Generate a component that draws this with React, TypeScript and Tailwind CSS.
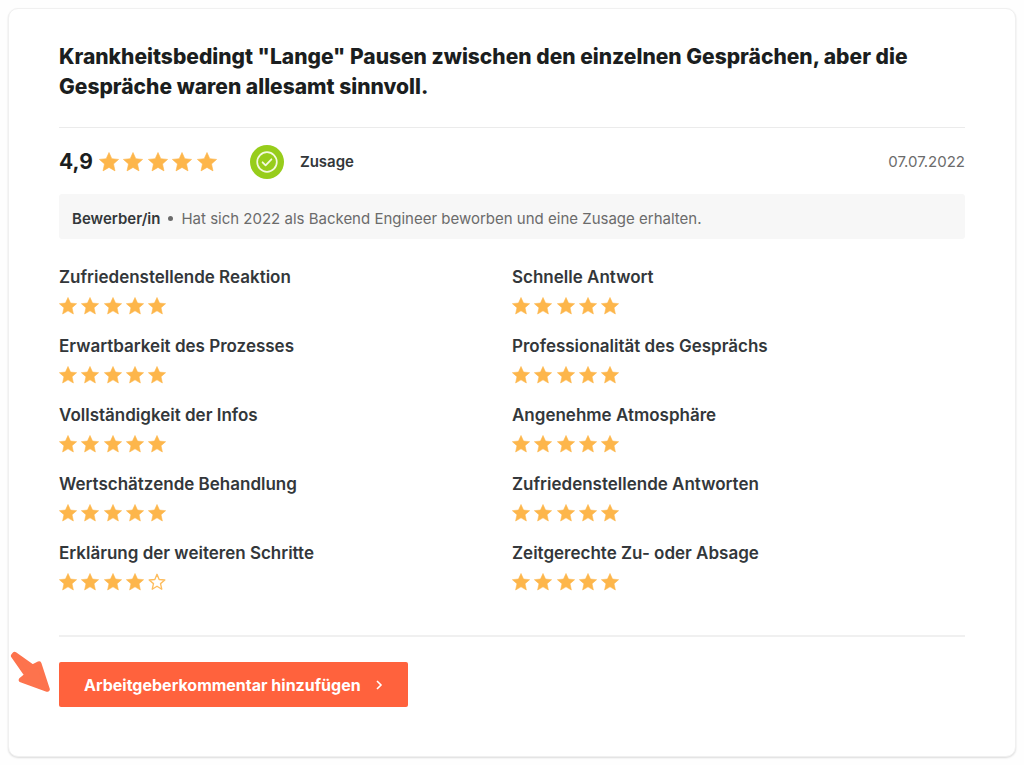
const LEFT = [
  { label: 'Zufriedenstellende Reaktion', stars: 5 },
  { label: 'Erwartbarkeit des Prozesses', stars: 5 },
  { label: 'Vollständigkeit der Infos', stars: 5 },
  { label: 'Wertschätzende Behandlung', stars: 5 },
  { label: 'Erklärung der weiteren Schritte', stars: 4 },
];

const RIGHT = [
  { label: 'Schnelle Antwort', stars: 5 },
  { label: 'Professionalität des Gesprächs', stars: 5 },
  { label: 'Angenehme Atmosphäre', stars: 5 },
  { label: 'Zufriedenstellende Antworten', stars: 5 },
  { label: 'Zeitgerechte Zu- oder Absage', stars: 5 },
];

function Star({ filled, className }: { filled: boolean; className: string }) {
  return (
    <svg viewBox="0 0 20 20" className={className} aria-hidden="true">
      {filled ? (
        <path
          fill="#fdb64b"
          d="M10 .5 12.8 6.7 19.6 7.4 14.5 11.9 16 18.9 10 15.4 4 18.9 5.5 11.9 .4 7.4 7.2 6.7Z"
          stroke="#fdb64b"
          strokeWidth="0.6"
          strokeLinejoin="round"
        />
      ) : (
        <path
          fill="none"
          stroke="#fdbd5e"
          strokeWidth="1.5"
          strokeLinejoin="round"
          d="M10 1.4 12.4 7.2 18.7 7.8 13.9 11.8 15.3 18 10 14.7 4.7 18 6.1 11.8 1.3 7.8 7.6 7.2Z"
        />
      )}
    </svg>
  );
}

function Stars({ value, large = false }: { value: number; large?: boolean }) {
  return (
    <div
      role="img"
      aria-label={`${value} von 5 Sternen`}
      className={large ? 'flex w-[118px] items-center justify-between' : 'flex h-[22px] w-[107px] items-center justify-between'}
    >
      {[1, 2, 3, 4, 5].map((n) => (
        <Star key={n} filled={n <= value} className={large ? 'size-5' : 'size-[18px]'} />
      ))}
    </div>
  );
}

function Ratings({ items }: { items: { label: string; stars: number }[] }) {
  return (
    <ul className="flex flex-col gap-[17px]">
      {items.map((item) => (
        <li key={item.label} className="flex flex-col gap-1.5">
          <h3 className="text-[17px] leading-6 font-semibold text-[#33373a]">{item.label}</h3>
          <Stars value={item.stars} />
        </li>
      ))}
    </ul>
  );
}

export default function App() {
  return (
    <main className="bg-[#fefefe] p-2 font-['Inter','Liberation_Sans',sans-serif]">
      <article className="rounded-[10px] border border-[#f0f0f0] bg-white px-[50px] pt-[33px] pb-[49px] shadow-[0_1px_2px_rgba(0,0,0,0.14)]">
        <h2 className="pb-[25px] text-[21px] leading-[30px] font-extrabold text-[#1b1e20]">
          Krankheitsbedingt "Lange" Pausen zwischen den einzelnen Gesprächen, aber die Gespräche waren allesamt
          sinnvoll.
        </h2>

        <div className="flex h-[67px] items-center border-t border-[#ebebeb] pt-0.5">
          <span className="mr-1.5 text-[21px] leading-[30px] font-bold text-[#1b1e20]">4,9</span>
          <Stars value={5} large />
          <svg viewBox="0 0 34 34" className="ml-[33px] size-[34px]" fill="none" aria-hidden="true">
            <circle cx="17" cy="17" r="17" fill="#97cd1b" />
            <circle cx="17" cy="17" r="9.8" stroke="#f4fadf" strokeWidth="1.7" />
            <path d="m12.6 17.3 3 3 5.8-6" stroke="#f4fadf" strokeWidth="1.8" strokeLinecap="round" strokeLinejoin="round" />
          </svg>
          <span className="ml-4 text-[15px] leading-6 font-semibold text-[#33373a]">Zusage</span>
          <time dateTime="2022-07-07" className="ml-auto text-[15px] leading-6 text-[#6b6b6b]">
            07.07.2022
          </time>
        </div>

        <p className="flex min-h-[45px] items-center rounded-[3px] bg-[#f7f7f7] px-[13px] pt-1 text-[15px] leading-6 text-[#6b6b6b]">
          <strong className="font-semibold text-[#33373a]">Bewerber/in</strong>
          <span className="mx-2 size-[5px] rounded-full bg-[#6b6b6b]" />
          <span>Hat sich 2022 als Backend Engineer beworben und eine Zusage erhalten.</span>
        </p>

        <div className="grid grid-cols-2 pt-[26px] pb-[42px]">
          <Ratings items={LEFT} />
          <Ratings items={RIGHT} />
        </div>

        <div className="relative border-t-2 border-[#f0f0f0] pt-[25px]">
          <svg
            viewBox="0 0 40 42"
            className="absolute top-3.5 left-[-49px] h-[42px] w-10"
            aria-hidden="true"
          >
            <path
              fill="#fd734d"
              stroke="#fd734d"
              strokeWidth="5"
              strokeLinejoin="round"
              d="M4.6 3.4 22.6 16 29 12.8 37.3 38.3 11.2 29 17 24.2 3.4 4.8Z"
            />
          </svg>
          <button
            type="button"
            className="flex h-[45px] items-center gap-3.5 rounded-xs bg-[#ff623d] px-[25px] text-base font-bold text-white"
          >
            Arbeitgeberkommentar hinzufügen
            <svg viewBox="0 0 8 10" className="h-2.5 w-2" fill="none" aria-hidden="true">
              <path d="m2 1 4 4-4 4" stroke="#fff" strokeWidth="1.6" />
            </svg>
          </button>
        </div>
      </article>
    </main>
  );
}
